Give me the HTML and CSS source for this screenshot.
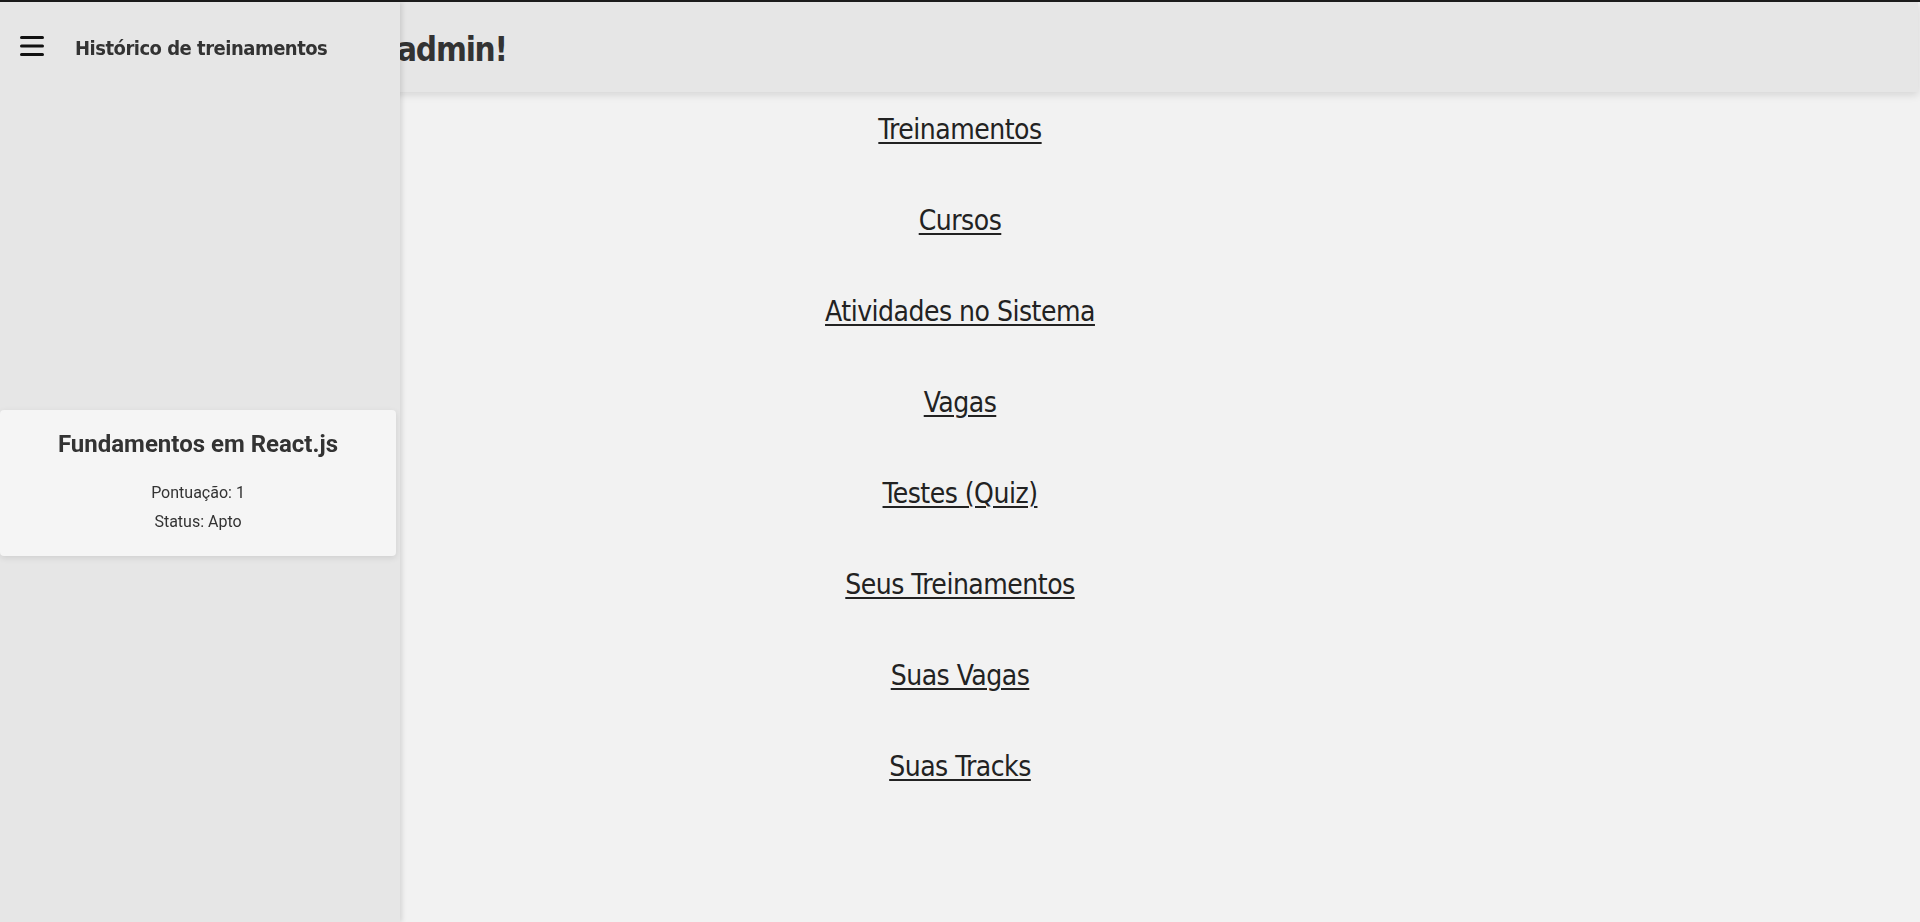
FILE: index.html
```html
<!DOCTYPE html>
<html lang="pt-BR">
<head>
<meta charset="utf-8">
<title>Painel</title>
<link rel="stylesheet" href="styles.css">
</head>
<body>
  <div class="app">
    <header class="topbar">
      <h1 class="greeting">Olá, admin!</h1>
    </header>
    <main class="menu">
      <a class="menu-link" href="#">Treinamentos</a>
      <a class="menu-link" href="#">Cursos</a>
      <a class="menu-link" href="#">Atividades no Sistema</a>
      <a class="menu-link" href="#">Vagas</a>
      <a class="menu-link" href="#">Testes (Quiz)</a>
      <a class="menu-link" href="#">Seus Treinamentos</a>
      <a class="menu-link" href="#">Suas Vagas</a>
      <a class="menu-link" href="#">Suas Tracks</a>
    </main>
  </div>
  <aside class="drawer">
    <div class="drawer-head">
      <button class="burger" aria-label="Menu">
        <svg width="24" height="22" viewBox="0 0 24 22"><rect x="0" y="1" width="24" height="3" rx="1.5" fill="#111"/><rect x="0" y="9.5" width="24" height="3" rx="1.5" fill="#111"/><rect x="0" y="18" width="24" height="3" rx="1.5" fill="#111"/></svg>
      </button>
      <h2 class="drawer-title">Histórico de treinamentos</h2>
    </div>
    <div class="drawer-body">
      <div class="card">
        <h3 class="card-title">Fundamentos em React.js</h3>
        <p class="card-line">Pontuação: 1</p>
        <p class="card-line">Status: Apto</p>
      </div>
    </div>
  </aside>
</body>
</html>
```

FILE: styles.css
```css
* { box-sizing: border-box; }
html, body { margin: 0; padding: 0; }
body {
  background: #f2f2f2;
  border-top: 2px solid #1c1c1c;
  height: 922px;
  overflow: hidden;
  font-family: "DejaVu Sans Condensed", "Liberation Sans", sans-serif;
  color: #333;
}
.app { display: flex; flex-direction: column; }
.topbar {
  height: 90px;
  background: #e6e6e6;
  box-shadow: 0 3px 8px rgba(0,0,0,0.12);
  display: flex;
  align-items: center;
  padding-left: 326px;
  margin-right: 2px;
  position: relative;
  z-index: 1;
}
.greeting {
  margin: 0;
  font-size: 33px;
  font-weight: 700;
  letter-spacing: -1.2px;
  color: #333;
  padding-top: 5px;
}
.menu {
  display: flex;
  flex-direction: column;
  align-items: center;
  gap: 51px;
  padding-top: 18px;
}
.menu-link {
  font-size: 28px;
  letter-spacing: -0.5px;
  line-height: 40px;
  color: #222;
  text-decoration: underline;
  text-decoration-thickness: 2px;
  text-underline-offset: 3px;
}
.drawer {
  position: fixed;
  top: 2px;
  left: 0;
  width: 400px;
  height: 920px;
  background: #e6e6e6;
  box-shadow: 2px 0 5px rgba(0,0,0,0.12);
  z-index: 5;
}
.drawer-head {
  height: 88px;
  display: flex;
  align-items: center;
  gap: 31px;
  padding-left: 20px;
}
.burger {
  border: 0;
  background: none;
  padding: 0;
  width: 24px;
  height: 22px;
  display: block;
}
.burger svg { display: block; }
.drawer-title {
  margin: 0;
  font-size: 20px;
  font-weight: 700;
  letter-spacing: -0.5px;
  color: #333;
  padding-top: 4px;
}
.drawer-body { padding-top: 320px; }
.card {
  width: 396px;
  background: #f5f5f5;
  border-radius: 4px;
  box-shadow: 0 2px 6px rgba(0,0,0,0.1);
  padding: 20px 0 24px;
  text-align: center;
  font-family: Roboto, "Liberation Sans", sans-serif;
}
.card-title {
  margin: 0 0 25px;
  font-size: 24px;
  font-weight: 700;
  color: #333;
  line-height: 28px;
}
.card-line {
  margin: 0;
  font-size: 16px;
  line-height: 20px;
  color: #333;
}
.card-line + .card-line { margin-top: 9px; }
```
